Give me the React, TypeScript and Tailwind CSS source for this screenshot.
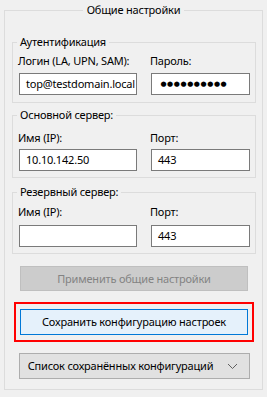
import React from "react";

const font = { fontFamily: '"Noto Sans", "Segoe UI", sans-serif' };
const T = "text-[11px] leading-[16px] tracking-[-0.2px]";

function Dots() {
  const arr = Array.from({ length: 10 });
  return (
    <span className="flex items-center ml-[2px]">
      {arr.map((_, i) => (
        <span
          key={i}
          className="inline-block w-[6.7px] text-center text-[7px] leading-[16px]"
          style={{ fontFamily: '"DejaVu Sans", sans-serif' }}
        >
          ●
        </span>
      ))}
    </span>
  );
}

function Input({ value, w, password }: { value?: string; w: string; password?: boolean }) {
  return (
    <div
      className={`${w} h-[22px] bg-white border border-[#7a7a7a] flex items-center pl-[6px] overflow-hidden whitespace-nowrap ${T} text-black`}
    >
      {password ? <Dots /> : value}
    </div>
  );
}

function Row({
  l1,
  l2,
  v1,
  v2,
  password,
  gapTop,
}: {
  l1: string;
  l2: string;
  v1?: string;
  v2?: string;
  password?: boolean;
  gapTop: string;
}) {
  return (
    <div className="grid grid-cols-[118px_99px] gap-x-[14px]">
      <div className={`ml-[-1px] ${T} whitespace-nowrap`}>{l1}</div>
      <div className={`ml-[-1px] ${T} whitespace-nowrap`}>{l2}</div>
      <div className={gapTop}>
        <Input value={v1} w="w-[118px]" />
      </div>
      <div className={gapTop}>
        <Input value={v2} w="w-[99px]" password={password} />
      </div>
    </div>
  );
}

export default function App() {
  return (
    <div className="w-[267px] h-[397px] bg-[#f0f0f0] pt-[2px] pl-[4px] text-black" style={font}>
      <fieldset className="w-[259px] border border-[#dcdcdc] p-0 m-0">
        <legend className={`mx-auto px-[4px] ${T}`}>Общие настройки</legend>
        <div className="pl-[7px] pr-[6px] pb-[10px]">
          {/* Auth */}
          <fieldset className="mt-[16px] border border-[#dcdcdc] p-0 m-0 w-[244px]">
            <legend className={`ml-[4px] px-[3px] ${T}`}>Аутентификация</legend>
            <div className="pl-[6px] pr-[5px] pt-[3px] pb-[7px]">
              <Row
                l1="Логин (LA, UPN, SAM):"
                l2="Пароль:"
                v1="top@testdomain.local"
                password
                gapTop="mt-[4px]"
              />
            </div>
          </fieldset>

          {/* Main server */}
          <fieldset className="mt-[4px] border border-[#dcdcdc] p-0 m-0 w-[244px]">
            <legend className={`ml-[4px] px-[3px] ${T}`}>Основной сервер:</legend>
            <div className="pl-[6px] pr-[5px] pt-[7px] pb-[6px]">
              <Row l1="Имя (IP):" l2="Порт:" v1="10.10.142.50" v2="443" gapTop="mt-[3px]" />
            </div>
          </fieldset>

          {/* Reserve server */}
          <fieldset className="mt-[6px] border border-[#dcdcdc] p-0 m-0 w-[244px]">
            <legend className={`ml-[4px] px-[3px] ${T}`}>Резервный сервер:</legend>
            <div className="pl-[6px] pr-[5px] pt-[4px] pb-[6px]">
              <Row l1="Имя (IP):" l2="Порт:" v1="" v2="443" gapTop="mt-[5px]" />
            </div>
          </fieldset>

          {/* Apply (disabled) */}
          <div className={`mt-[12px] ml-[8px] w-[228px] h-[25px] bg-[#cccccc] border border-[#bfbfbf] flex items-center justify-center ${T} text-[#838383]`}>
            Применить общие настройки
          </div>

          {/* Save, highlighted */}
          <div className="mt-[11px] ml-[2px] w-[240px] border-2 border-[#ff0000] pl-[4px] pr-[4px] pt-[5px] pb-[5px]">
            <div className={`h-[26px] bg-[#e5f1fb] border border-[#0078d7] flex items-center justify-center ${T}`}>
              Сохранить конфигурацию настроек
            </div>
          </div>

          {/* Dropdown */}
          <div className={`mt-[11px] ml-[7px] w-[231px] h-[26px] bg-[#e1e1e1] border border-[#adadad] flex items-center ${T}`}>
            <div className="flex-1 text-center whitespace-nowrap pl-[1px]">Список сохранённых конфигураций</div>
            <svg width="23" height="10" viewBox="0 0 23 10" className="mr-[6px]">
              <polyline points="8,3 12.5,7.5 17,3" fill="none" stroke="#606060" strokeWidth="1" />
            </svg>
          </div>
        </div>
      </fieldset>
    </div>
  );
}
